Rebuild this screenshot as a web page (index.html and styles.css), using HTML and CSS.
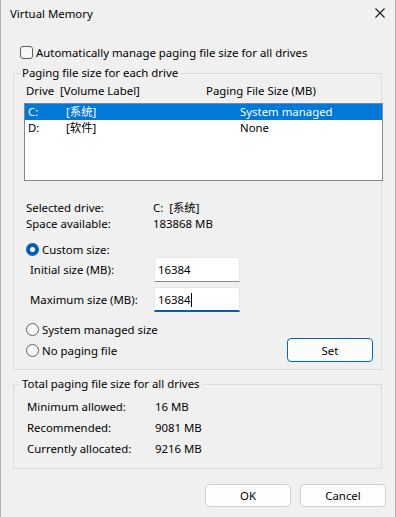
FILE: index.html
```html
<!DOCTYPE html>
<html>
<head>
    <title>Virtual Memory</title>
    <meta http-equiv="Content-Type" content="text/html; charset=utf-8" />
    <link rel="stylesheet" href="styles.css">
</head>
<body>
<div class="window">
    <div class="titlebar">
        <span class="title">Virtual Memory</span>
        <svg class="close" width="10" height="10" viewBox="0 0 10 10">
            <path d="M0.5 0.5 L9.5 9.5 M9.5 0.5 L0.5 9.5" stroke="#1a1a1a" stroke-width="1.1" fill="none"/>
        </svg>
    </div>

    <div class="check-row">
        <span class="checkbox"></span>
        <span>Automatically manage paging file size for all drives</span>
    </div>

    <!-- Диски -->
    <fieldset class="group group-drives">
        <legend>Paging file size for each drive</legend>
        <div class="list-head">
            <span class="head-drive">Drive  [Volume Label]</span>
            <span>Paging File Size (MB)</span>
        </div>
        <div class="listbox">
            <div class="list-row selected">
                <span class="cell-letter">C:</span>
                <span class="cell-label">[系统]</span>
                <span>System managed</span>
            </div>
            <div class="list-row">
                <span class="cell-letter">D:</span>
                <span class="cell-label">[软件]</span>
                <span>None</span>
            </div>
        </div>

        <div class="info-row first">
            <span class="info-label">Selected drive:</span>
            <span class="pre">C:  [系统]</span>
        </div>
        <div class="info-row">
            <span class="info-label">Space available:</span>
            <span>183868 MB</span>
        </div>

        <div class="radio-row custom">
            <span class="radio checked"></span>
            <span>Custom size:</span>
        </div>
        <div class="size-row">
            <span class="size-label">Initial size (MB):</span>
            <div class="textbox">16384</div>
        </div>
        <div class="size-row second">
            <span class="size-label">Maximum size (MB):</span>
            <div class="textbox focused">16384<span class="caret"></span></div>
        </div>
        <div class="radio-row system">
            <span class="radio"></span>
            <span>System managed size</span>
        </div>
        <div class="radio-row nopaging">
            <span class="radio"></span>
            <span>No paging file</span>
            <div class="button button-set">Set</div>
        </div>
    </fieldset>

    <!-- Итого -->
    <fieldset class="group group-total">
        <legend>Total paging file size for all drives</legend>
        <div class="total-row first">
            <span class="total-label">Minimum allowed:</span>
            <span>16 MB</span>
        </div>
        <div class="total-row">
            <span class="total-label">Recommended:</span>
            <span>9081 MB</span>
        </div>
        <div class="total-row">
            <span class="total-label">Currently allocated:</span>
            <span>9216 MB</span>
        </div>
    </fieldset>

    <div class="dialog-buttons">
        <div class="button">OK</div>
        <div class="button">Cancel</div>
    </div>
</div>
</body>
</html>
```

FILE: styles.css
```css
html, body {margin: 0; height: 100%; overflow: hidden;}
body{
    background: #f0f0f0;
    font-family: "Noto Sans", "Noto Sans CJK SC", sans-serif;
    font-size: 11.4px;
    color: #000;
}
.window{
    width: 396px;
    height: 517px;
    box-sizing: border-box;
    border-left: 1px solid #b0b0b0;
    border-right: 1px solid #b0b0b0;
}
.titlebar{
    display: flex;
    align-items: center;
    justify-content: space-between;
    height: 26px;
}
.title{
    padding-left: 9px;
}
.close{
    margin-right: 10px;
}
.check-row{
    display: flex;
    align-items: center;
    height: 16px;
    margin-top: 18px;
    margin-left: 19px;
    gap: 3px;
}
.checkbox{
    width: 13px;
    height: 13px;
    box-sizing: border-box;
    border: 1px solid #5f5f5f;
    border-radius: 3px;
    background: #f7f7f7;
}

/* Группы */
.group{
    width: 369px;
    box-sizing: border-box;
    margin: 5px 0 0 12px;
    padding: 0 0 7px 6px;
    border: 1px solid #dcdcdc;
    min-width: 0;
}
.group legend{
    padding: 0 2px;
    line-height: 16px;
}
.list-head{
    display: flex;
    margin: 2px 0 0 6px;
    line-height: 16px;
}
.head-drive{
    width: 180px;
    white-space: pre;
}
.listbox{
    width: 359px;
    height: 78px;
    box-sizing: border-box;
    margin: 4px 0 0 4px;
    border: 1px solid #828790;
    background: white;
}
.list-row{
    display: flex;
    height: 16px;
    line-height: 16px;
    padding-left: 3px;
}
.list-row.selected{
    background: #0078d7;
    color: white;
}
.cell-letter{
    width: 38px;
}
.cell-label{
    width: 174px;
}
.info-row{
    display: flex;
    line-height: 16px;
    margin-left: 6px;
}
.info-row.first{
    margin-top: 19px;
}
.info-label{
    width: 127px;
}
.pre{
    white-space: pre;
}
.radio-row{
    display: flex;
    align-items: center;
    gap: 3px;
    margin-left: 6px;
    height: 16px;
}
.radio-row.custom{
    margin-top: 10px;
    height: 15px;
}
.radio-row.system{
    margin-top: 9px;
}
.radio-row.nopaging{
    margin-top: 1px;
    height: 24px;
}
.radio{
    width: 13px;
    height: 13px;
    box-sizing: border-box;
    border-radius: 50%;
    border: 1px solid #5f5f5f;
    background: #f7f7f7;
}
.radio.checked{
    border: 4px solid #005fb8;
    background: white;
}
.size-row{
    display: flex;
    align-items: center;
    height: 25px;
    margin-left: 10px;
}
.size-row.second{
    margin-top: 5px;
}
.size-label{
    width: 124px;
}
.textbox{
    width: 86px;
    height: 25px;
    box-sizing: border-box;
    padding-left: 3px;
    display: flex;
    align-items: center;
    background: white;
    border: 1px solid #e6e6e6;
    border-bottom-color: #8a8a8a;
    border-radius: 3px 3px 0 0;
}
.textbox.focused{
    border-bottom: 2px solid #005fb8;
    padding-top: 1px;
}
.caret{
    display: inline-block;
    width: 1px;
    height: 14px;
    background: #000;
}
.button{
    width: 86px;
    height: 23px;
    box-sizing: border-box;
    display: flex;
    align-items: center;
    justify-content: center;
    background: #fdfdfd;
    border: 1px solid #d0d0d0;
    border-radius: 4px;
}
.button-set{
    height: 24px;
    margin-left: auto;
    margin-right: 8px;
    border-color: #0067c0;
}
.group-total{
    margin-top: 6px;
    padding-bottom: 11px;
}
.total-row{
    display: flex;
    line-height: 16px;
    margin: 5px 0 0 7px;
}
.total-row.first{
    margin-top: 7px;
}
.total-label{
    width: 128px;
}
.dialog-buttons{
    display: flex;
    justify-content: flex-end;
    gap: 9px;
    margin-top: 15px;
    padding-right: 9px;
}
```
